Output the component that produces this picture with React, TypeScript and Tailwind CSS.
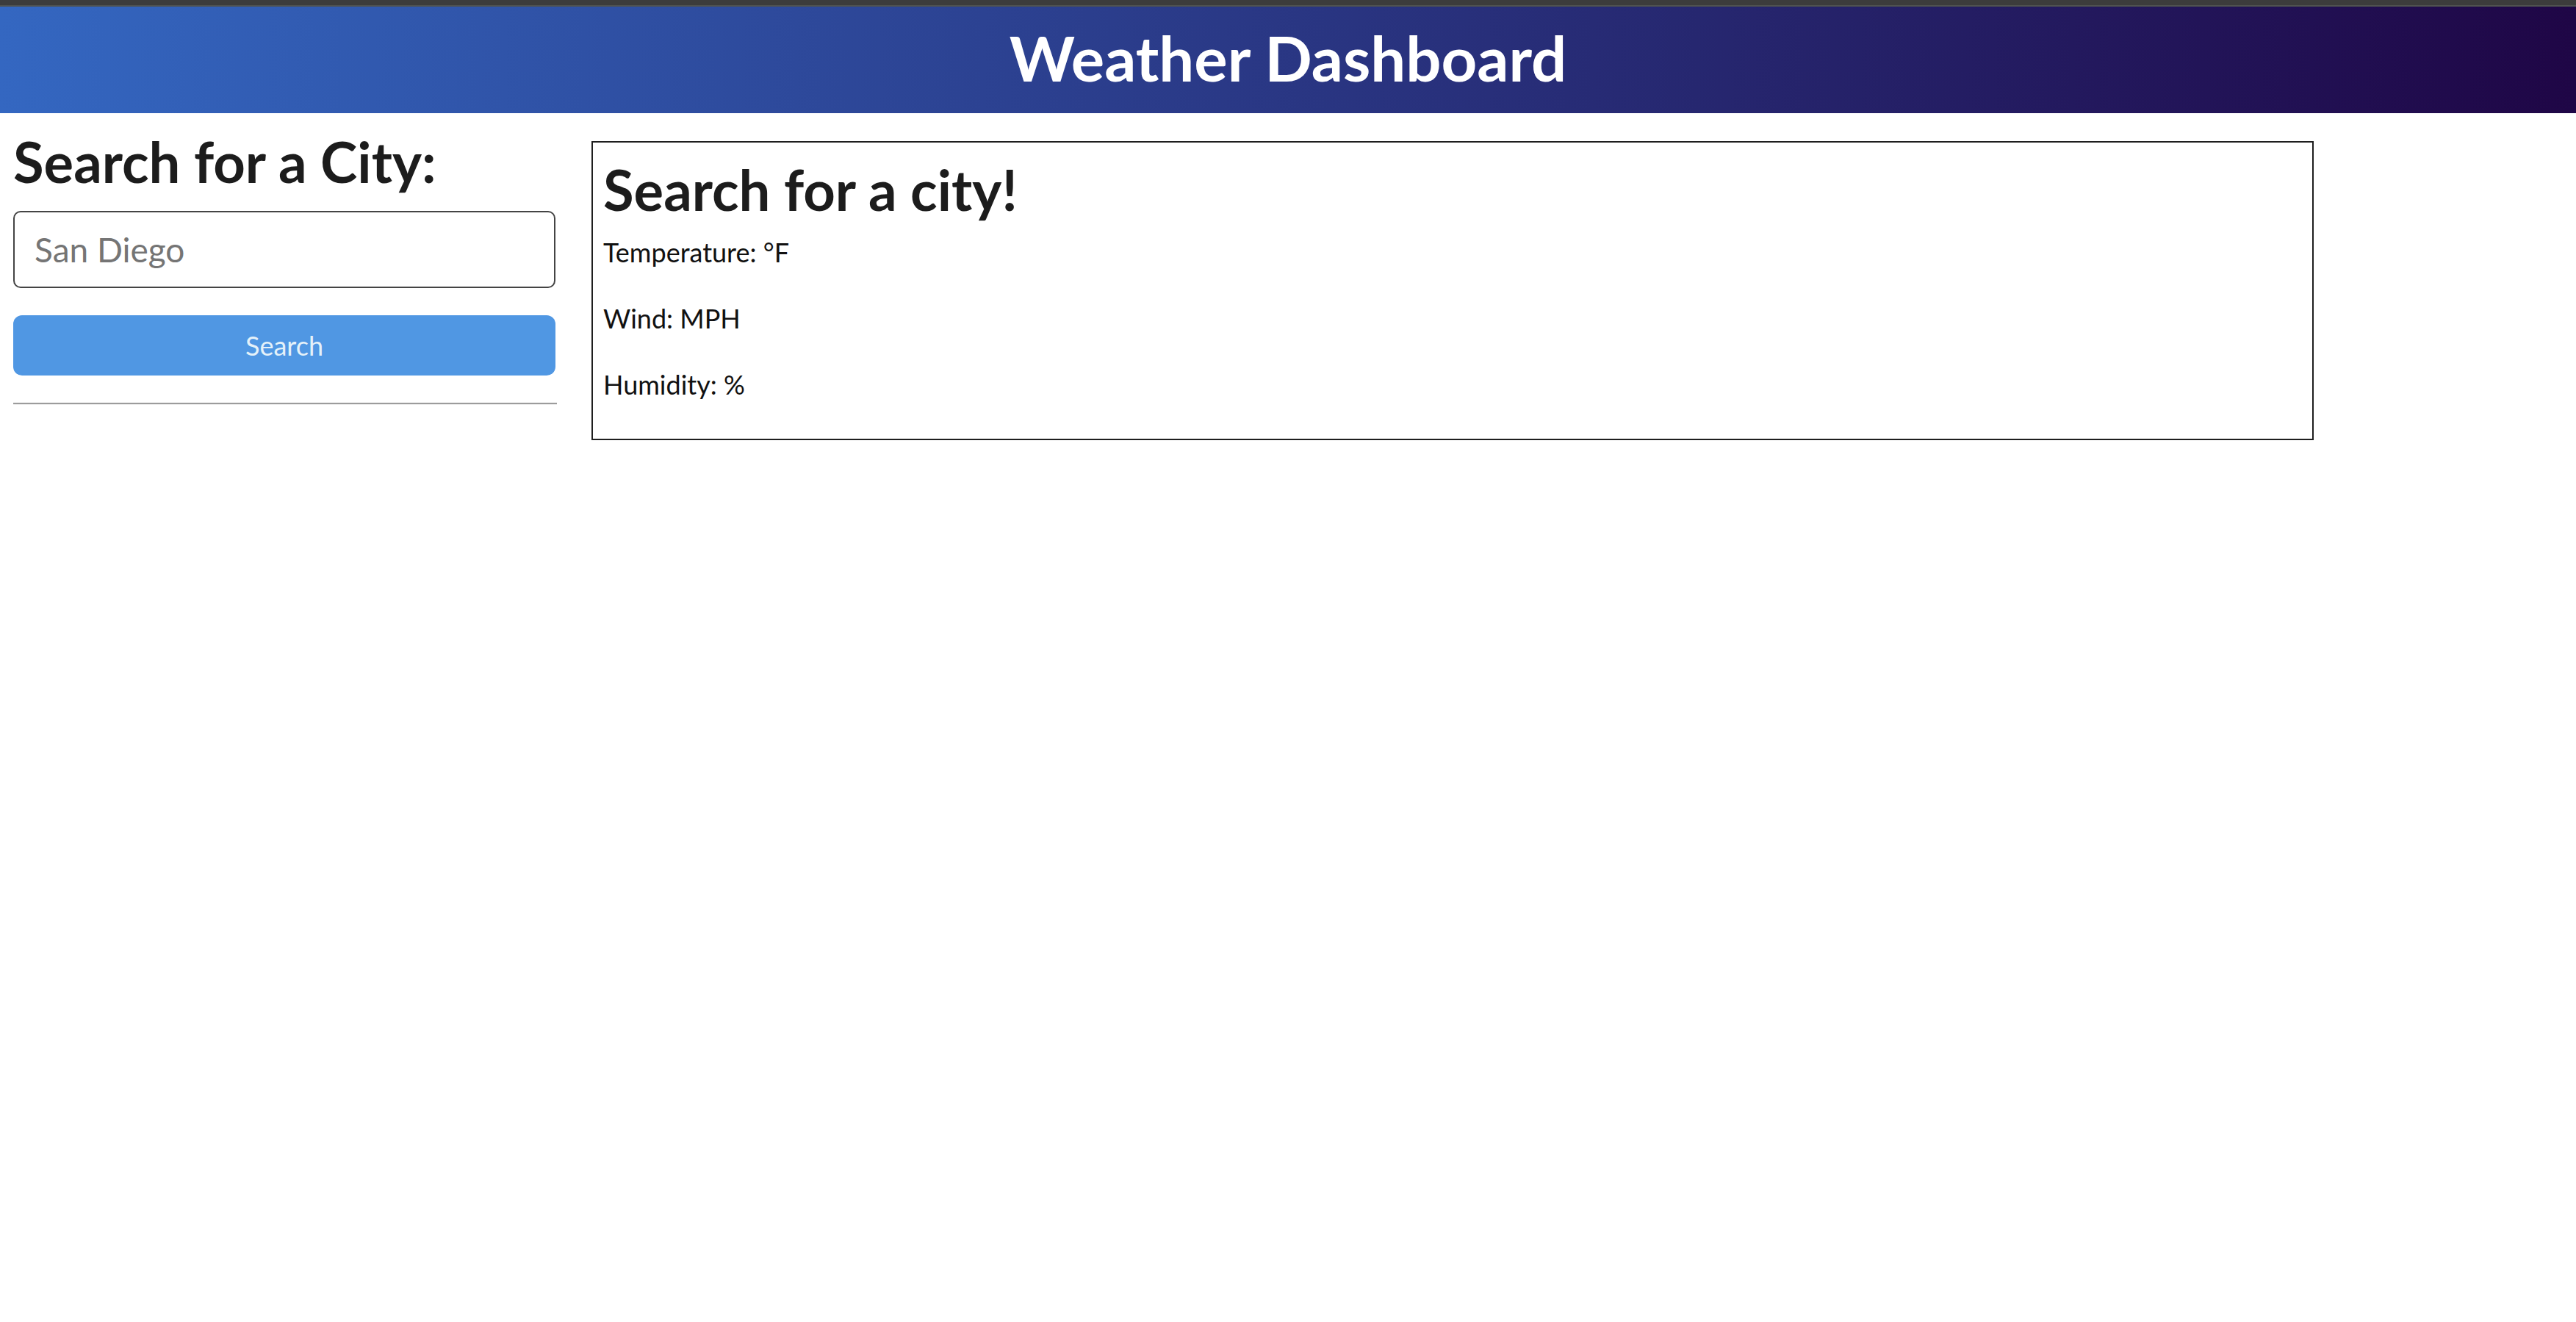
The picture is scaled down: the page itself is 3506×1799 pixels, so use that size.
/* Weather dashboard: gradient header, city search on the left,
   current-conditions card on the right. */

export default function App() {
  return (
    <div className="min-h-screen bg-white font-['Lato',sans-serif] text-[#1c1c1c]">
      {/* window chrome strip */}
      <div className="h-[9px] bg-[#3c3c3c] border-b-2 border-[#4f524f]" />

      <header className="h-[145px] flex items-center justify-center bg-[linear-gradient(to_right,#3467c1,#1f0646)]">
        <h1 className="text-[85px] leading-none font-bold text-white -mt-[6px]">Weather Dashboard</h1>
      </header>

      <main className="flex items-start gap-[47px] px-[18px]">
        {/* Search sidebar */}
        <aside className="w-[740px] pt-[28px]">
          <h2 className="text-[76px] leading-none font-bold">Search for a City:</h2>

          <input
            type="text"
            placeholder="San Diego"
            className="mt-[29px] block w-[738px] h-[105px] rounded-[10px] border-2 border-[#444444] px-[27px] text-[46px] text-[#333] placeholder:text-[#757575] outline-none"
          />

          <button className="mt-[37px] block w-[738px] h-[82px] rounded-[12px] bg-[#5097e3] text-[36px] text-[#e4f1f9]">
            Search
          </button>

          <hr className="mt-[37px] w-[740px] border-0 border-t-2 border-b border-t-[#9c9c9c] border-b-[#eeeeee]" />
        </aside>

        {/* Current weather card */}
        <section className="mt-[38px] w-[2344px] border-2 border-[#1e1e1e] px-[14px] pt-[26px] pb-[47px]">
          <h2 className="text-[76px] leading-none font-bold">Search for a city!</h2>
          <div className="mt-[20px] flex flex-col gap-[36px] text-[36px] leading-[54px] text-[#111]">
            <p>Temperature: °F</p>
            <p>Wind: MPH</p>
            <p>Humidity: %</p>
          </div>
        </section>
      </main>
    </div>
  );
}
